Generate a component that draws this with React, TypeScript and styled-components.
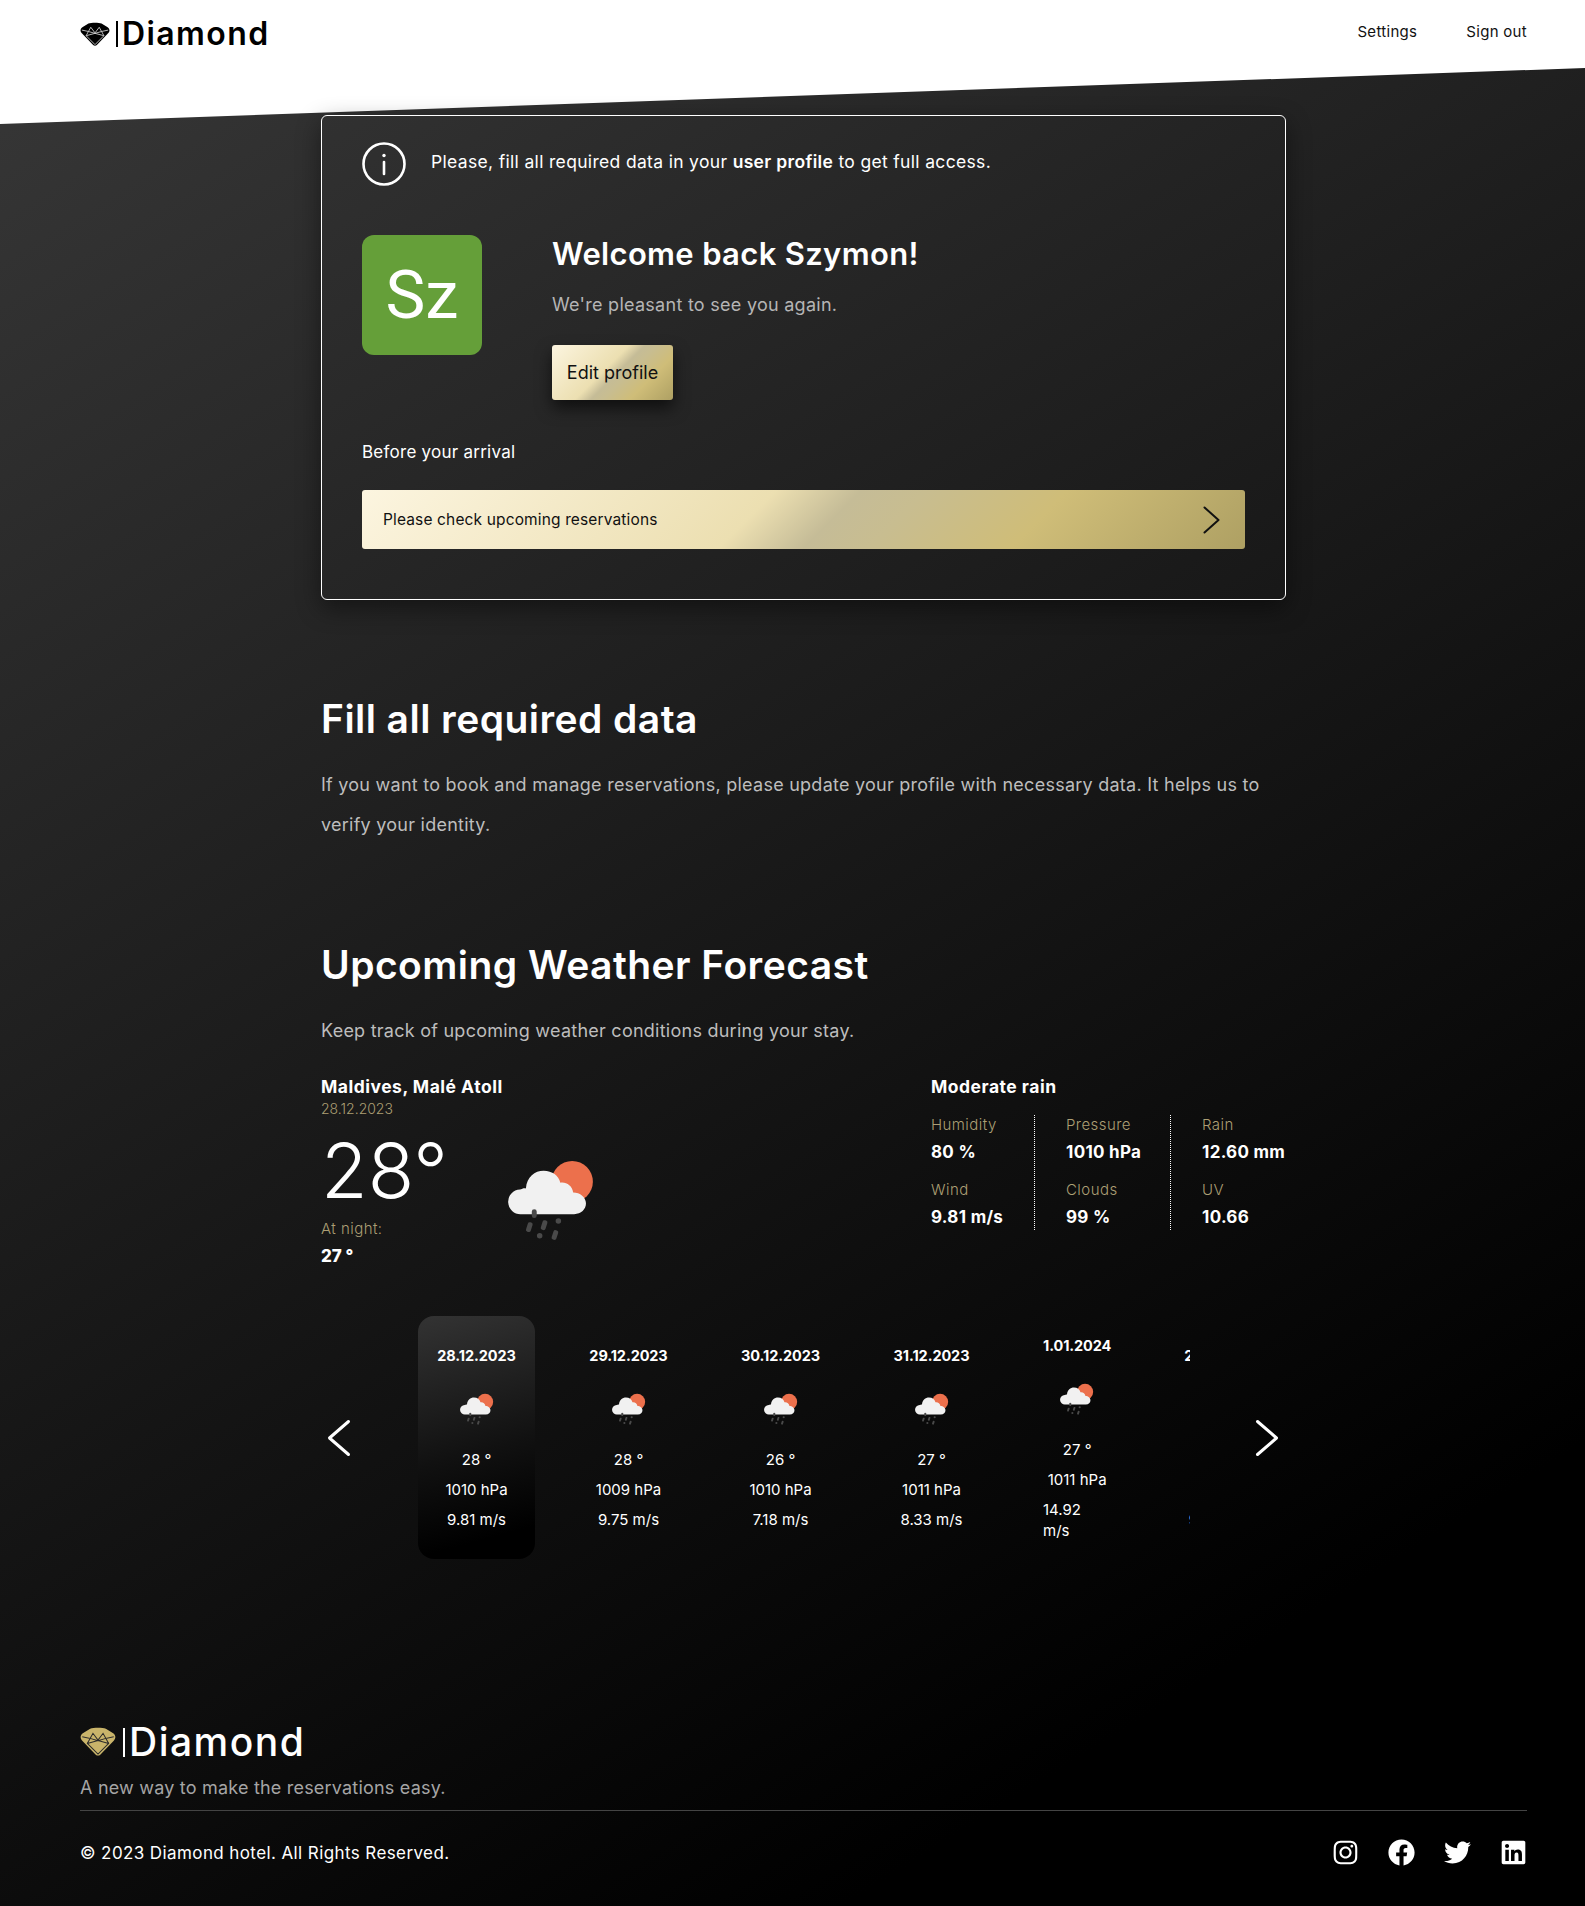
import React from "react";
import styled, { createGlobalStyle } from "styled-components";
import { FaFacebook, FaInstagram, FaLinkedin, FaTwitter } from "react-icons/fa";

const GlobalStyle = createGlobalStyle`
  * { box-sizing: border-box; }
  html, body { margin: 0; padding: 0; }
  body {
    font-family: "Inter", "Open Sans", sans-serif;
    color: #fff;
    background: #000;
  }
`;

const Diamond = ({ width, body, line }: { width: number; body: string; line: string }) => (
  <svg width={width} height={width * 0.82} viewBox="0 0 32 26">
    <path
      d="M9 1.500C12 .3 20 .3 23 1.500L29.500 5.500C32 7.500 32 10 30 12L18 24.500Q16 26 14 24.500L2 12C0 10 0 7.500 2.500 5.500Z"
      fill={body}
    />
    <path
      d="M2 8.500l7 1.500 2.500-4.500 4.500 6 4.500-6 2.500 4.500 7-1.500M9 10l-2.500 4.500 9.500 9.500 9.500-9.500L23 10M6.500 14.500l9.500-2.500 9.500 2.500M9 10l7 2 7-2"
      fill="none"
      stroke={line}
      strokeWidth="0.900"
    />
  </svg>
);

const WeatherIcon = ({ size }: { size: number }) => (
  <svg width={size} height={size * 0.94} viewBox="0 0 88 83">
    <circle cx="65" cy="23" r="21" fill="#ec704c" />
    <path
      d="M13 56a12.500 12.500 0 0 1-1-25c2-1 5-2 6-1 1-12 9-18 18-18 9 0 15 5 17 12 6-1 12 3 13 10 7 0 13 5 13 11 0 6-5 11-12 11z"
      fill="#f1f1f1"
    />
    <g fill="#4a4a4a">
      <rect x="24" y="51" width="5" height="9" rx="2.500" />
      <rect x="19" y="64" width="5" height="10" rx="2" transform="rotate(18 21 69)" />
      <rect x="34" y="62" width="5" height="10" rx="2" transform="rotate(18 36 67)" />
      <circle cx="51" cy="63" r="2.800" />
      <circle cx="32" cy="78" r="2.800" />
      <rect x="45" y="72" width="5" height="10" rx="2" transform="rotate(18 47 77)" />
    </g>
  </svg>
);

const Chevron = ({ dir, w, h, color, stroke }: { dir: "left" | "right"; w: number; h: number; color: string; stroke: number }) => (
  <svg width={w + 5} height={h + 5} viewBox={`0 0 ${w + 5} ${h + 5}`} fill="none">
    <path
      d={
        dir === "left"
          ? `M${w + 2.5} 2.500L2.500 ${h / 2 + 2.5}L${w + 2.5} ${h + 2.5}`
          : `M2.500 2.500L${w + 2.5} ${h / 2 + 2.5}L2.500 ${h + 2.5}`
      }
      stroke={color}
      strokeWidth={stroke}
      strokeLinecap="round"
      strokeLinejoin="round"
    />
  </svg>
);

const forecast = [
  { date: "28.12.2023", temp: "28 °", pressure: "1010 hPa", wind: "9.81 m/s", width: 117, active: true },
  { date: "29.12.2023", temp: "28 °", pressure: "1009 hPa", wind: "9.75 m/s", width: 117 },
  { date: "30.12.2023", temp: "26 °", pressure: "1010 hPa", wind: "7.18 m/s", width: 117 },
  { date: "31.12.2023", temp: "27 °", pressure: "1011 hPa", wind: "8.33 m/s", width: 115 },
  { date: "1.01.2024", temp: "27 °", pressure: "1011 hPa", wind: "14.92 m/s", width: 104, lifted: true },
  { date: "2.01.2024", temp: "27 °", pressure: "1011 hPa", wind: "9.85 m/s", width: 100 },
];

const stats = [
  ["Humidity", "80 %", "Wind", "9.81 m/s"],
  ["Pressure", "1010 hPa", "Clouds", "99 %"],
  ["Rain", "12.60 mm", "UV", "10.66"],
];

const App = () => (
  <Page>
    <GlobalStyle />
    <HeaderShape />
    <Header>
      <Logo>
        <Diamond width={30} body="#000" line="#d8d8d8" />
        <LogoBar />
        Diamond
      </Logo>
      <Nav>
        <NavLink>Settings</NavLink>
        <NavLink>Sign out</NavLink>
      </Nav>
    </Header>
    <Main>
      <Card>
        <Notice>
          <svg width="44" height="44" viewBox="0 0 44 44" fill="none" stroke="#fff">
            <circle cx="22" cy="22" r="20.500" strokeWidth="2.600" />
            <path d="M22 20v12" strokeWidth="2.600" strokeLinecap="round" />
            <circle cx="22" cy="13.500" r="1.700" fill="#fff" stroke="none" />
          </svg>
          <NoticeText>
            Please, fill all required data in your <b>user profile</b> to get full access.
          </NoticeText>
        </Notice>
        <Welcome>
          <Avatar>Sz</Avatar>
          <WelcomeBody>
            <WelcomeTitle>Welcome back Szymon!</WelcomeTitle>
            <WelcomeText>We're pleasant to see you again.</WelcomeText>
            <EditButton>Edit profile</EditButton>
          </WelcomeBody>
        </Welcome>
        <ArrivalLabel>Before your arrival</ArrivalLabel>
        <ArrivalBar>
          Please check upcoming reservations
          <Chevron dir="right" w={14} h={25} color="#111" stroke={2} />
        </ArrivalBar>
      </Card>

      <Section>
        <SectionTitle>Fill all required data</SectionTitle>
        <SectionText>
          If you want to book and manage reservations, please update your profile with necessary
          data. It helps us to verify your identity.
        </SectionText>
      </Section>

      <WeatherSection>
        <SectionTitle>Upcoming Weather Forecast</SectionTitle>
        <SectionText>Keep track of upcoming weather conditions during your stay.</SectionText>
        <Today>
          <TodayLeft>
            <div>
              <Place>Maldives, Malé Atoll</Place>
              <DateLabel>28.12.2023</DateLabel>
              <BigTemp>28°</BigTemp>
              <StatLabel>At night:</StatLabel>
              <NightTemp>27 °</NightTemp>
            </div>
            <TodayIcon>
              <WeatherIcon size={87} />
            </TodayIcon>
          </TodayLeft>
          <TodayRight>
            <Place>Moderate rain</Place>
            <StatGrid>
              {stats.map((col) => (
                <StatCol key={col[0]}>
                  <StatLabel>{col[0]}</StatLabel>
                  <StatValue>{col[1]}</StatValue>
                  <StatLabel>{col[2]}</StatLabel>
                  <StatValue>{col[3]}</StatValue>
                </StatCol>
              ))}
            </StatGrid>
          </TodayRight>
        </Today>
        <Slider>
          <Chevron dir="left" w={19} h={33} color="#fff" stroke={3} />
          <Track>
            {forecast.map((day) => (
              <Day key={day.date} $width={day.width} $active={day.active} $lifted={day.lifted}>
                <DayDate>{day.date}</DayDate>
                <DayIcon>
                  <WeatherIcon size={34} />
                </DayIcon>
                <DayLine>{day.temp}</DayLine>
                <DayLine>{day.pressure}</DayLine>
                <DayLine>{day.wind}</DayLine>
              </Day>
            ))}
          </Track>
          <NextArrow>
            <Chevron dir="right" w={19} h={33} color="#fff" stroke={3} />
          </NextArrow>
        </Slider>
      </WeatherSection>
    </Main>
    <Footer>
      <FooterLogo>
        <Diamond width={36} body="#c9b46a" line="#2a2a2a" />
        <FooterLogoBar />
        Diamond
      </FooterLogo>
      <Tagline>A new way to make the reservations easy.</Tagline>
      <FooterBottom>
        <Copyright>© 2023 Diamond hotel. All Rights Reserved.</Copyright>
        <Socials>
          <FaInstagram size={27} />
          <FaFacebook size={27} />
          <FaTwitter size={27} />
          <FaLinkedin size={27} />
        </Socials>
      </FooterBottom>
    </Footer>
  </Page>
);

const goldGradient = `#fcf5e0 0%, #ecdfb1 44%, #c5bc97 53%, #c8bd90 60%, #cfbd78 75%, #aea063 100%`;

const Page = styled.div`
  position: relative;
  width: 1585px;
  height: 1906px;
  overflow: hidden;
  background: linear-gradient(148deg, #383838 0%, #000 84%);
`;

const HeaderShape = styled.div`
  position: absolute;
  inset: 0 0 auto 0;
  height: 124px;
  background: #fff;
  clip-path: polygon(0 0, 100% 0, 100% 68px, 0 124px);
`;

const Header = styled.header`
  position: relative;
  height: 115px;
  padding: 16px 58px 0 80px;
  display: flex;
  justify-content: space-between;
  align-items: flex-start;
`;

const Logo = styled.div`
  display: flex;
  align-items: center;
  color: #000;
  font-size: 32px;
  font-weight: 600;
  line-height: 36px;
  letter-spacing: 1.4px;
`;

const LogoBar = styled.span`
  width: 2px;
  height: 26px;
  margin: 0 4px 0 6px;
  background: currentColor;
`;

const FooterLogoBar = styled(LogoBar)`
  height: 29px;
  margin: 0 4px 0 7px;
`;

const Nav = styled.nav`
  display: flex;
  gap: 49px;
  padding-top: 7px;
`;

const NavLink = styled.a`
  color: #111;
  font-size: 15px;
  line-height: 18px;
  letter-spacing: 0.3px;
`;

const Main = styled.main`
  position: relative;
  width: 965px;
  margin-left: 321px;
`;

const Card = styled.section`
  height: 485px;
  padding: 26px 40px 0;
  border: 1px solid #fff;
  border-radius: 6px;
  box-shadow: 0 8px 24px rgba(0, 0, 0, 0.45);
`;

const Notice = styled.div`
  display: flex;
  align-items: center;
  gap: 25px;
`;

const NoticeText = styled.p`
  margin: 0 0 6px;
  font-size: 17.500px;
  letter-spacing: 0.33px;
  b {
    font-weight: 600;
  }
`;

const Welcome = styled.div`
  display: flex;
  margin-top: 49px;
`;

const Avatar = styled.div`
  width: 120px;
  height: 120px;
  border-radius: 12px;
  background: #659f39;
  display: flex;
  align-items: center;
  justify-content: center;
  font-family: "Roboto", sans-serif;
  font-size: 67px;
`;

const WelcomeBody = styled.div`
  margin-left: 70px;
`;

const WelcomeTitle = styled.h2`
  margin: 0;
  font-size: 31px;
  line-height: 38px;
  font-weight: 600;
  letter-spacing: 0.33px;
`;

const WelcomeText = styled.p`
  margin: 19px 0 0;
  font-size: 18px;
  line-height: 26px;
  letter-spacing: 0.27px;
  color: #b5b5b5;
`;

const EditButton = styled.button`
  display: block;
  width: 121px;
  height: 55px;
  margin-top: 27px;
  padding: 0;
  border: 0;
  border-radius: 3px;
  background: linear-gradient(135deg, ${goldGradient});
  box-shadow: 0 8px 16px rgba(0, 0, 0, 0.6);
  color: #111;
  font-family: inherit;
  font-size: 18px;
`;

const ArrivalLabel = styled.p`
  margin: 41px 0 0;
  font-size: 17px;
  line-height: 22px;
  letter-spacing: 0.25px;
`;

const ArrivalBar = styled.div`
  height: 59px;
  margin-top: 27px;
  padding: 0 24px 0 21px;
  display: flex;
  align-items: center;
  justify-content: space-between;
  border-radius: 3px;
  background: linear-gradient(135deg, ${goldGradient});
  color: #111;
  font-size: 15.500px;
  letter-spacing: 0.14px;
`;

const Section = styled.section`
  margin-top: 97px;
`;

const WeatherSection = styled.section`
  margin-top: 98px;
`;

const SectionTitle = styled.h2`
  margin: 0;
  font-size: 39px;
  line-height: 44px;
  font-weight: 600;
  letter-spacing: 0.45px;
`;

const SectionText = styled.p`
  margin: 24px 0 0;
  font-size: 18px;
  line-height: 40px;
  letter-spacing: 0.25px;
  color: #bdbdbd;
`;

const Today = styled.div`
  display: flex;
  justify-content: space-between;
  margin-top: 24px;
`;

const TodayLeft = styled.div`
  display: flex;
`;

const TodayIcon = styled.div`
  margin: 84px 0 0 5px;
`;

const Place = styled.div`
  font-size: 17.500px;
  line-height: 24px;
  font-weight: 700;
  letter-spacing: 0.5px;
`;

const Muted = styled.div`
  color: #ac9f74;
  font-size: 15px;
  line-height: 20px;
  font-weight: 300;
`;

const DateLabel = styled(Muted)`
  font-size: 14px;
`;

const StatLabel = styled(Muted)`
  letter-spacing: 0.45px;
`;

const BigTemp = styled.div`
  margin: 9px 0 7px;
  font-size: 76px;
  line-height: 84px;
  font-weight: 300;
`;

const NightTemp = styled.div`
  margin-top: 6px;
  font-size: 17px;
  line-height: 22px;
  font-weight: 800;
`;

const TodayRight = styled.div`
  width: 355px;
`;

const StatGrid = styled.div`
  display: flex;
  margin-top: 16px;
`;

const StatCol = styled.div`
  flex: 0 0 136px;
  padding: 0 0 2px 31px;
  border-left: 1px dotted #fff;
  &:first-child {
    flex-basis: 103px;
    padding-left: 0;
    border-left: 0;
  }
  &:last-child {
    flex-basis: 116px;
  }
`;

const StatValue = styled.div`
  margin: 6px 0 17px;
  font-size: 17px;
  line-height: 22px;
  font-weight: 700;
  letter-spacing: 0.3px;
  white-space: nowrap;
  &:last-child {
    margin-bottom: 0;
  }
`;

const Slider = styled.div`
  display: flex;
  align-items: center;
  margin: 49px 0 0 6px;
`;

const NextArrow = styled.div`
  display: flex;
  margin-left: 65px;
`;

const Track = styled.div`
  flex: 0 0 772px;
  height: 244px;
  margin-left: 67px;
  display: flex;
  overflow: hidden;
`;

const Day = styled.div<{ $width: number; $active?: boolean; $lifted?: boolean }>`
  flex: 0 0 ${(p) => p.$width}px;
  height: 243px;
  margin-right: 35px;
  padding: 30px 19px 0;
  border-radius: 16px;
  display: flex;
  flex-direction: column;
  align-items: center;
  background: ${(p) => (p.$active ? "linear-gradient(165deg, #333 0%, #111 55%, #000 88%)" : "transparent")};
  transform: ${(p) => (p.$lifted ? "translateY(-10px)" : "none")};
`;

const DayDate = styled.div`
  font-size: 14.500px;
  line-height: 20px;
  font-weight: 700;
  letter-spacing: -0.1px;
  white-space: nowrap;
`;

const DayIcon = styled.div`
  margin: 27px 0 24px;
  height: 32px;
`;

const DayLine = styled.div`
  margin-bottom: 9px;
  font-size: 15px;
  line-height: 21px;
`;

const Footer = styled.footer`
  position: absolute;
  left: 80px;
  right: 58px;
  top: 1720px;
`;

const FooterLogo = styled(Logo)`
  color: #fff;
  font-size: 39px;
  line-height: 44px;
  font-weight: 500;
  letter-spacing: 1.500px;
`;

const Tagline = styled.p`
  margin: 12px 0 0;
  padding-bottom: 10px;
  border-bottom: 1px solid #444;
  color: #a5a5a5;
  font-size: 18px;
  line-height: 24px;
  letter-spacing: 0.2px;
`;

const FooterBottom = styled.div`
  display: flex;
  align-items: center;
  justify-content: space-between;
  margin-top: 28px;
`;

const Copyright = styled.div`
  font-size: 17px;
  letter-spacing: 0.4px;
`;

const Socials = styled.div`
  display: flex;
  gap: 29px;
`;

export default App;
